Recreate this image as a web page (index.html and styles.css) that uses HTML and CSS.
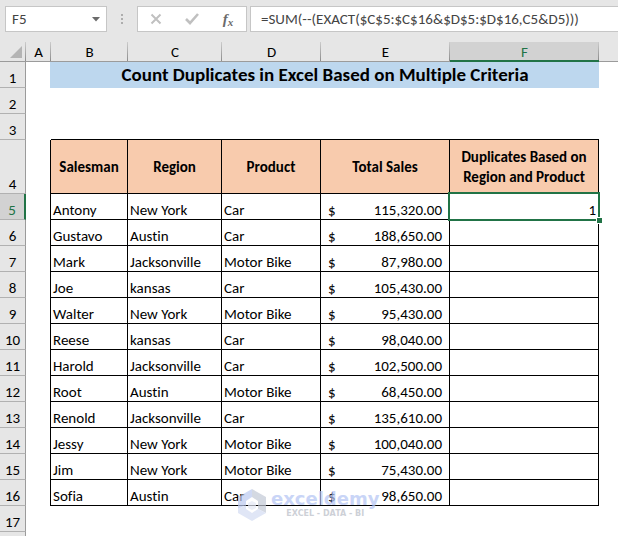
FILE: index.html
```
<!DOCTYPE html>
<html lang="en">
<head>
    <meta charset="UTF-8">
    <meta name="viewport" content="width=device-width, initial-scale=1.0">
    <title>Count Duplicates in Excel</title>
    <link rel="stylesheet" href="styles.css">
</head>
<body>
    <header class="formula-bar">
        <div class="name-box">
            <input type="text" value="F5" aria-label="Name box">
            <button type="button" aria-label="Open name list">
                <svg width="8" height="5" viewBox="0 0 8 5"><path d="M0 0h8L4 4.500z" fill="#6b6b6b"/></svg>
            </button>
        </div>
        <svg class="grip" width="2" height="10" viewBox="0 0 2 10"><path d="M0 0h2v2H0zM0 4h2v2H0zM0 8h2v2H0z" fill="#adadad"/></svg>
        <div class="actions">
            <button type="button" aria-label="Cancel">
                <svg width="12" height="12" viewBox="0 0 12 12"><path d="M1.500 1.500l9 9M10.500 1.500l-9 9" stroke="#c0c0c0" stroke-width="2" fill="none"/></svg>
            </button>
            <button type="button" aria-label="Enter">
                <svg width="14" height="12" viewBox="0 0 14 12"><path d="M1 6l4 4L13 1" stroke="#c0c0c0" stroke-width="2.600" fill="none"/></svg>
            </button>
            <button type="button" aria-label="Insert function" class="fx">f<sub>x</sub></button>
        </div>
        <input class="formula" type="text" aria-label="Formula" value="=SUM(--(EXACT($C$5:$C$16&amp;$D$5:$D$16,C5&amp;D5)))">
    </header>

    <main class="sheet">
        <table>
            <colgroup>
                <col class="col-num"><col class="col-a"><col class="col-b"><col class="col-c">
                <col class="col-d"><col class="col-e"><col class="col-f"><col>
            </colgroup>
            <thead>
                <tr>
                    <th class="corner"><svg width="12" height="12" viewBox="0 0 12 12"><path d="M12 0v12H0z" fill="#b4b4b4"/></svg></th>
                    <th>A</th><th>B</th><th>C</th><th>D</th><th>E</th><th class="active">F</th><th class="last"></th>
                </tr>
            </thead>
            <tbody>
                <tr><th>1</th><td class="title-edge"></td><td class="title" colspan="5">Count Duplicates in Excel Based on Multiple Criteria</td><td></td></tr>
                <tr><th>2</th><td colspan="7"></td></tr>
                <tr class="above"><th>3</th><td></td><td></td><td></td><td></td><td></td><td></td><td></td></tr>
                <tr class="heads"><th>4</th><td></td><td>Salesman</td><td>Region</td><td>Product</td><td>Total Sales</td><td>Duplicates Based on Region and Product</td><td></td></tr>
                <tr class="data"><th class="active">5</th><td></td><td>Antony</td><td>New York</td><td>Car</td><td><div class="money"><span>$</span><span>115,320.00</span></div></td><td class="selected">1<span class="selection"></span></td><td></td></tr>
                <tr class="data"><th>6</th><td></td><td>Gustavo</td><td>Austin</td><td>Car</td><td><div class="money"><span>$</span><span>188,650.00</span></div></td><td></td><td></td></tr>
                <tr class="data"><th>7</th><td></td><td>Mark</td><td>Jacksonville</td><td>Motor Bike</td><td><div class="money"><span>$</span><span>87,980.00</span></div></td><td></td><td></td></tr>
                <tr class="data"><th>8</th><td></td><td>Joe</td><td>kansas</td><td>Car</td><td><div class="money"><span>$</span><span>105,430.00</span></div></td><td></td><td></td></tr>
                <tr class="data"><th>9</th><td></td><td>Walter</td><td>New York</td><td>Motor Bike</td><td><div class="money"><span>$</span><span>95,430.00</span></div></td><td></td><td></td></tr>
                <tr class="data"><th>10</th><td></td><td>Reese</td><td>kansas</td><td>Car</td><td><div class="money"><span>$</span><span>98,040.00</span></div></td><td></td><td></td></tr>
                <tr class="data"><th>11</th><td></td><td>Harold</td><td>Jacksonville</td><td>Car</td><td><div class="money"><span>$</span><span>102,500.00</span></div></td><td></td><td></td></tr>
                <tr class="data"><th>12</th><td></td><td>Root</td><td>Austin</td><td>Motor Bike</td><td><div class="money"><span>$</span><span>68,450.00</span></div></td><td></td><td></td></tr>
                <tr class="data"><th>13</th><td></td><td>Renold</td><td>Jacksonville</td><td>Car</td><td><div class="money"><span>$</span><span>135,610.00</span></div></td><td></td><td></td></tr>
                <tr class="data"><th>14</th><td></td><td>Jessy</td><td>New York</td><td>Motor Bike</td><td><div class="money"><span>$</span><span>100,040.00</span></div></td><td></td><td></td></tr>
                <tr class="data"><th>15</th><td></td><td>Jim</td><td>New York</td><td>Motor Bike</td><td><div class="money"><span>$</span><span>75,430.00</span></div></td><td></td><td></td></tr>
                <tr class="data"><th>16</th><td></td><td>Sofia</td><td>Austin</td><td>Car</td><td><div class="money"><span>$</span><span>98,650.00</span></div></td><td></td><td></td></tr>
                <tr><th>17</th><td colspan="7"></td></tr>
                <tr><th></th><td colspan="7"></td></tr>
            </tbody>
        </table>

        <div class="watermark">
            <svg width="28" height="32" viewBox="0 0 28 32">
                <path d="M14 0L0 8v12l8-4v-4l6-4z" fill="#bccaf0"/>
                <path d="M14 0l14 8v16l-8-4v-8l-6-4z" fill="#c3c9d6"/>
                <path d="M0 20v4l14 8 14-8-8-4-6 4-6-4v-4z" fill="#d3dcf3"/>
                <path d="M14 12l4 2v5l-4 2-4-2v-5z" fill="#e4e9f6"/>
            </svg>
            <div class="brand">
                <span class="brand-name">exceldemy</span>
                <span class="brand-sub">EXCEL - DATA - BI</span>
            </div>
        </div>
    </main>
</body>
</html>
```

FILE: styles.css
```
* {
    box-sizing: border-box;
}
body {
    margin: 0;
    height: 100vh;
    overflow: hidden;
    display: flex;
    flex-direction: column;
    background-color: #ffffff;
    color: #000000;
    font-family: Calibri, Carlito, Lato, sans-serif;
    font-size: 15px;
    font-variant-ligatures: none;
}
input, button {
    font: inherit;
    font-variant-ligatures: none;
    color: #444444;
    background: none;
    border: none;
    padding: 0;
    margin: 0;
    min-width: 0;
}

/* formula bar */
.formula-bar {
    display: flex;
    flex-shrink: 0;
    align-items: center;
    height: 42px;
    padding: 6px 0 10px 5px;
    background-color: #e6e6e6;
}
.name-box, .actions, .formula {
    height: 26px;
    border: 1px solid #c6c6c6;
    background-color: #ffffff;
}
.name-box {
    display: flex;
    width: 102px;
    padding-left: 6px;
}
.name-box input {
    flex: 1;
}
.name-box button {
    display: flex;
    align-items: center;
    justify-content: center;
    width: 20px;
}
.grip {
    margin: 0 14px;
}
.actions {
    display: flex;
    width: 110px;
    margin-right: 3px;
}
.actions button {
    flex: 1;
    display: flex;
    align-items: center;
    justify-content: center;
}
.actions .fx {
    font: italic bold 15px "Liberation Serif", serif;
    color: #6b6b6b;
}
.fx sub {
    font-size: 11px;
    line-height: 18px;
    align-self: flex-end;
}
.formula {
    flex: 1;
    border-right: none;
    padding-left: 10px;
}

/* sheet */
.sheet {
    position: relative;
    flex: 1;
}
table {
    width: 100%;
    table-layout: fixed;
    border-collapse: separate;
    border-spacing: 0;
}
.col-num { width: 26px; }
.col-a { width: 25px; }
.col-b { width: 77px; }
.col-c { width: 94px; }
.col-d { width: 99px; }
.col-e { width: 129px; }
.col-f { width: 149px; }
th, td {
    height: 26px;
    padding: 0;
    line-height: 18px;
    vertical-align: bottom;
    white-space: nowrap;
}
th {
    font-weight: normal;
    background-color: #e6e6e6;
    border-right: 1px solid #9b9b9b;
    border-bottom: 1px solid #b1b1b1;
}
thead th {
    height: 20px;
    border-right: none;
    border-bottom-color: #9b9b9b;
    background-image: linear-gradient(#cccccc, #8c8c8c);
    background-position: right top;
    background-size: 1px 100%;
    background-repeat: no-repeat;
}
thead .last {
    background-image: none;
}
.corner {
    line-height: 0;
    padding: 0 4px 3px 0;
    text-align: right;
}
th.active {
    color: #217346;
    background-color: #d2d2d2;
}
thead .active {
    line-height: 16px;
    border-bottom: 2px solid #217346;
}
tbody .active {
    border-right: 2px solid #217346;
}
.title {
    background-color: #bdd7ee;
    vertical-align: middle;
    text-align: center;
    font-size: 19px;
    line-height: 26px;
    font-weight: bold;
}
.title-edge {
    border-right: 1px solid #bdd7ee;
}

/* bordered range B4:F16 */
.above td:nth-child(n+3):nth-child(-n+7) {
    border-bottom: 1px solid #000000;
}
.heads td:nth-child(n+3):nth-child(-n+7),
.data td:nth-child(n+3):nth-child(-n+7) {
    border-right: 1px solid #000000;
    border-bottom: 1px solid #000000;
}
.heads td:nth-child(2), .data td:nth-child(2) {
    border-right: 1px solid #000000;
}
.heads th {
    height: 54px;
}
.heads td {
    vertical-align: middle;
    text-align: center;
    white-space: normal;
    font-weight: bold;
    line-height: 20px;
}
.heads td:nth-child(n+3):nth-child(-n+7) {
    background-color: #f8cbad;
}
.data td {
    padding-left: 2px;
}
.money {
    display: flex;
    justify-content: space-between;
    padding: 0 7px 0 5px;
}
.data .selected {
    position: relative;
    text-align: right;
    padding-right: 2px;
}
.selection {
    position: absolute;
    inset: -2px;
    border: 2px solid #217346;
}
.selection::after {
    content: "";
    position: absolute;
    right: -5px;
    bottom: -5px;
    width: 5px;
    height: 5px;
    background-color: #217346;
    border: 1px solid #ffffff;
}

/* watermark */
.watermark {
    position: absolute;
    left: 238px;
    top: 447px;
    display: flex;
    gap: 5px;
    opacity: 0.7;
    pointer-events: none;
}
.brand {
    display: flex;
    flex-direction: column;
    align-items: center;
    font-family: "DejaVu Sans", sans-serif;
    font-weight: bold;
}
.brand-name {
    font-size: 18px;
    line-height: 20px;
    color: #b3c4f5;
}
.brand-sub {
    font-size: 8px;
    line-height: 10px;
    color: #b9bdc7;
}
```
